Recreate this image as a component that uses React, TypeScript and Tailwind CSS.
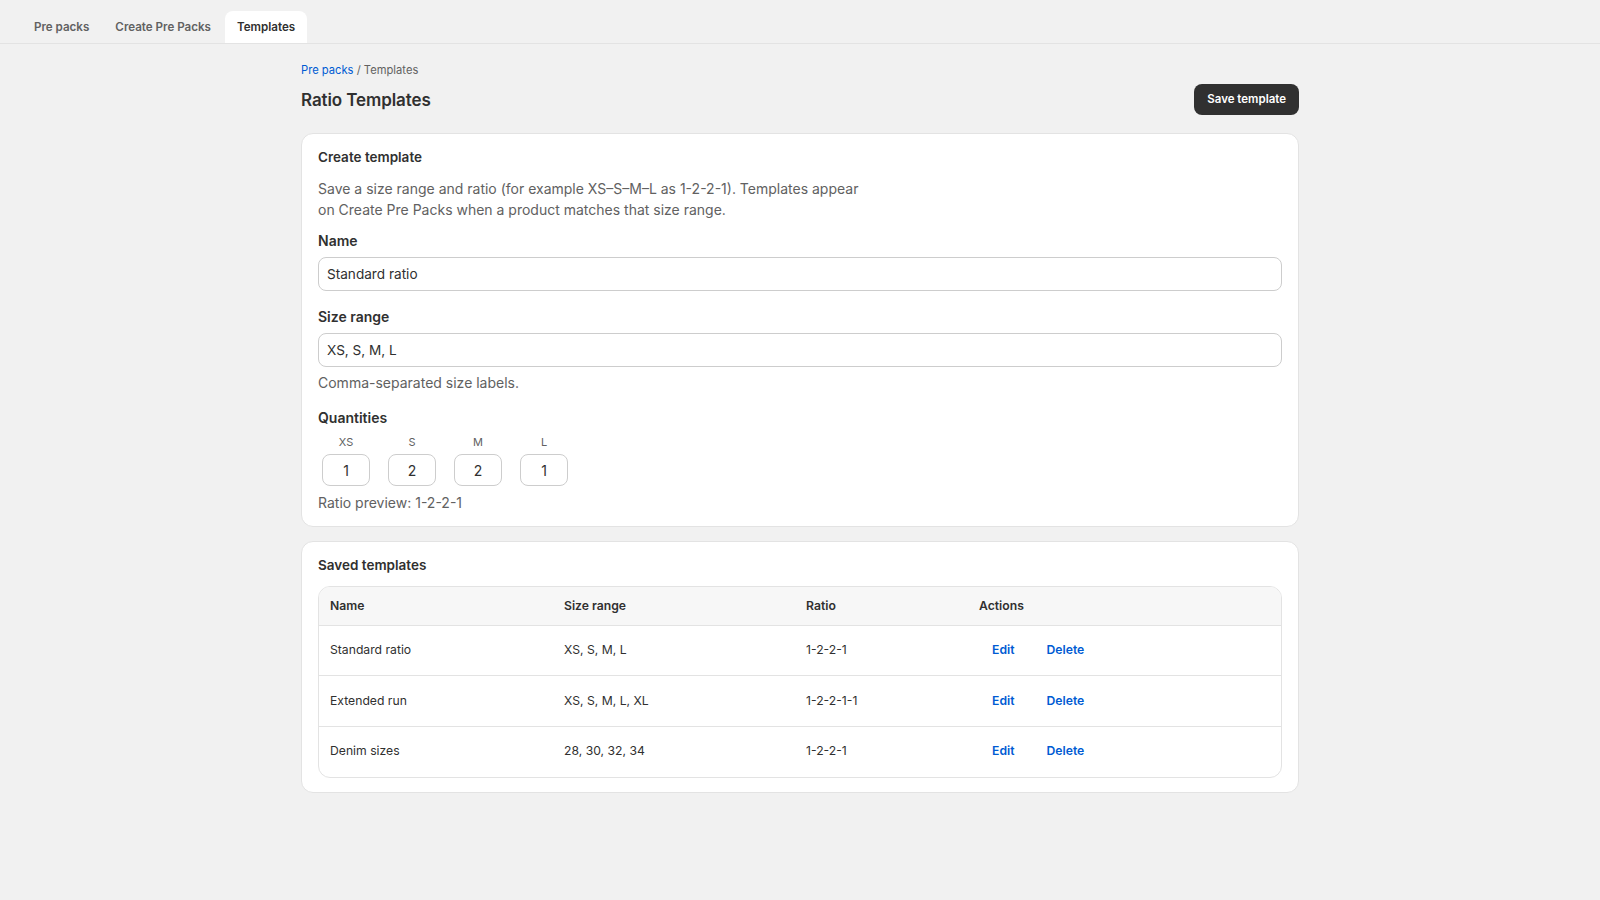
import React from "react";

const rows = [
  { name: "Standard ratio", range: "XS, S, M, L", ratio: "1-2-2-1" },
  { name: "Extended run", range: "XS, S, M, L, XL", ratio: "1-2-2-1-1" },
  { name: "Denim sizes", range: "28, 30, 32, 34", ratio: "1-2-2-1" },
];

const qty = [
  { s: "XS", v: "1" },
  { s: "S", v: "2" },
  { s: "M", v: "2" },
  { s: "L", v: "1" },
];

export default function App() {
  return (
    <div
      className="min-h-[900px] bg-[#f1f1f1] text-[#303030]"
      style={{ fontFamily: "Inter, 'Noto Sans', sans-serif" }}
    >
      <div className="h-[44px] border-b border-[#e3e3e3] flex items-end px-[22px] gap-[2px]">
        <button className="h-[32px] px-3 pt-[2px] text-[11.6px] font-semibold text-[#616161] rounded-t-lg">
          Pre packs
        </button>
        <button className="h-[32px] px-3 pt-[2px] text-[11.6px] font-semibold text-[#616161] rounded-t-lg">
          Create Pre Packs
        </button>
        <button className="h-[32px] px-3 pt-[2px] text-[11.6px] font-semibold text-[#303030] bg-white rounded-t-lg">
          Templates
        </button>
      </div>

      <div className="max-w-[998px] mx-auto pt-[18px] pb-10">
        <div className="text-[11.2px] leading-4 text-[#616161]">
          <a className="text-[#005bd3]">Pre packs</a> / Templates
        </div>
        <div className="mt-[6px] flex items-center justify-between">
          <h1 className="text-[17px] font-semibold leading-6 tracking-[-0.1px]">Ratio Templates</h1>
          <button className="h-[31px] px-[13px] pt-[1px] rounded-lg bg-[#303030] text-white text-[11.5px] font-semibold">
            Save template
          </button>
        </div>

        <div className="mt-[18px] bg-white border border-[#e3e3e3] rounded-xl px-4 pt-[15px] pb-[13px]">
          <h2 className="text-[13.5px] font-semibold leading-4">Create template</h2>
          <p className="mt-[13px] text-[14px] leading-[21px] text-[#616161] max-w-[548px]">
            Save a size range and ratio (for example XS–S–M–L as 1-2-2-1). Templates appear on Create Pre Packs
            when a product matches that size range.
          </p>

          <label className="block mt-[11px] text-[14px] font-semibold leading-5">Name</label>
          <input
            readOnly
            value="Standard ratio"
            className="mt-[6px] block w-full h-[34px] px-[8px] rounded-lg border border-[#cdcdcd] text-[13.6px] text-[#303030] outline-none"
          />

          <label className="block mt-[16px] text-[14px] font-semibold leading-5">Size range</label>
          <input
            readOnly
            value="XS, S, M, L"
            className="mt-[6px] block w-full h-[34px] px-[8px] rounded-lg border border-[#cdcdcd] text-[13.6px] text-[#303030] outline-none"
          />
          <p className="mt-[6px] text-[14px] leading-5 text-[#616161]">Comma-separated size labels.</p>

          <label className="block mt-[15px] text-[14px] font-semibold leading-5">Quantities</label>
          <div className="mt-[6px] flex gap-[10px]">
            {qty.map((q) => (
              <div key={q.s} className="w-14 px-1 flex flex-col items-center">
                <span className="text-[11px] leading-4 text-[#616161]">{q.s}</span>
                <input
                  readOnly
                  value={q.v}
                  className="mt-1 w-12 h-[32px] rounded-lg border border-[#cdcdcd] text-center text-[14px] text-[#303030] outline-none"
                />
              </div>
            ))}
          </div>
          <p className="mt-[7px] text-[14px] leading-5 text-[#616161]">Ratio preview: 1-2-2-1</p>
        </div>

        <div className="mt-[14px] bg-white border border-[#e3e3e3] rounded-xl px-4 pt-[15px] pb-[14px]">
          <h2 className="text-[13.5px] font-semibold leading-4">Saved templates</h2>
          <div className="mt-[13px] border border-[#e3e3e3] rounded-xl overflow-hidden">
            <table className="w-full table-fixed text-[12.2px] text-[#303030]">
              <colgroup>
                <col className="w-[234px]" />
                <col className="w-[242px]" />
                <col className="w-[173px]" />
                <col />
              </colgroup>
              <thead>
                <tr className="bg-[#f7f7f7] border-b border-[#e3e3e3]">
                  <th className="h-[38px] px-[11px] text-left font-semibold">Name</th>
                  <th className="h-[38px] px-[11px] text-left font-semibold">Size range</th>
                  <th className="h-[38px] px-[11px] text-left font-semibold">Ratio</th>
                  <th className="h-[38px] px-[11px] text-left font-semibold">Actions</th>
                </tr>
              </thead>
              <tbody>
                {rows.map((r, i) => (
                  <tr key={r.name} className={i < rows.length - 1 ? "border-b border-[#e3e3e3]" : ""}>
                    <td className="h-[50.5px] px-[11px]">{r.name}</td>
                    <td className="h-[50.5px] px-[11px]">{r.range}</td>
                    <td className="h-[50.5px] px-[11px]">{r.ratio}</td>
                    <td className="h-[50.5px] px-[11px]">
                      <div className="flex gap-2 ml-[1px]">
                        <button className="px-3 py-1 font-semibold text-[#005bd3]">Edit</button>
                        <button className="px-3 py-1 font-semibold text-[#005bd3]">Delete</button>
                      </div>
                    </td>
                  </tr>
                ))}
              </tbody>
            </table>
          </div>
        </div>
      </div>
    </div>
  );
}
